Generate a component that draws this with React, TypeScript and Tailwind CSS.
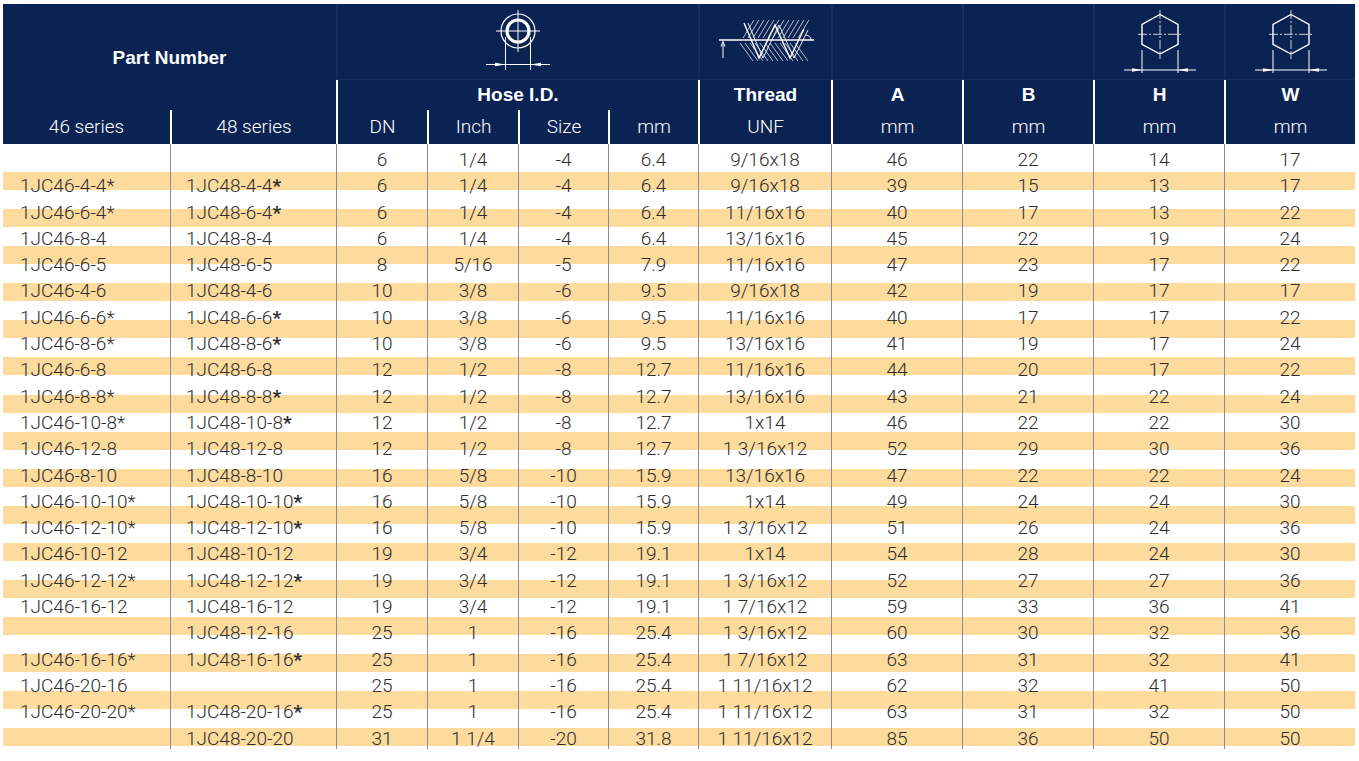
import React from "react";

const COLS =
  "grid grid-cols-[167px_166px_91px_91px_90px_90px_133px_131px_131px_131px_131px]";

type Row = string[];

// part 46, part 48, DN, inch, size, mm, UNF, A, B, H, W
const rows: Row[] = [
  ["", "", "6", "1/4", "-4", "6.4", "9/16x18", "46", "22", "14", "17"],
  ["1JC46-4-4*", "1JC48-4-4*", "6", "1/4", "-4", "6.4", "9/16x18", "39", "15", "13", "17"],
  ["1JC46-6-4*", "1JC48-6-4*", "6", "1/4", "-4", "6.4", "11/16x16", "40", "17", "13", "22"],
  ["1JC46-8-4", "1JC48-8-4", "6", "1/4", "-4", "6.4", "13/16x16", "45", "22", "19", "24"],
  ["1JC46-6-5", "1JC48-6-5", "8", "5/16", "-5", "7.9", "11/16x16", "47", "23", "17", "22"],
  ["1JC46-4-6", "1JC48-4-6", "10", "3/8", "-6", "9.5", "9/16x18", "42", "19", "17", "17"],
  ["1JC46-6-6*", "1JC48-6-6*", "10", "3/8", "-6", "9.5", "11/16x16", "40", "17", "17", "22"],
  ["1JC46-8-6*", "1JC48-8-6*", "10", "3/8", "-6", "9.5", "13/16x16", "41", "19", "17", "24"],
  ["1JC46-6-8", "1JC48-6-8", "12", "1/2", "-8", "12.7", "11/16x16", "44", "20", "17", "22"],
  ["1JC46-8-8*", "1JC48-8-8*", "12", "1/2", "-8", "12.7", "13/16x16", "43", "21", "22", "24"],
  ["1JC46-10-8*", "1JC48-10-8*", "12", "1/2", "-8", "12.7", "1x14", "46", "22", "22", "30"],
  ["1JC46-12-8", "1JC48-12-8", "12", "1/2", "-8", "12.7", "1 3/16x12", "52", "29", "30", "36"],
  ["1JC46-8-10", "1JC48-8-10", "16", "5/8", "-10", "15.9", "13/16x16", "47", "22", "22", "24"],
  ["1JC46-10-10*", "1JC48-10-10*", "16", "5/8", "-10", "15.9", "1x14", "49", "24", "24", "30"],
  ["1JC46-12-10*", "1JC48-12-10*", "16", "5/8", "-10", "15.9", "1 3/16x12", "51", "26", "24", "36"],
  ["1JC46-10-12", "1JC48-10-12", "19", "3/4", "-12", "19.1", "1x14", "54", "28", "24", "30"],
  ["1JC46-12-12*", "1JC48-12-12*", "19", "3/4", "-12", "19.1", "1 3/16x12", "52", "27", "27", "36"],
  ["1JC46-16-12", "1JC48-16-12", "19", "3/4", "-12", "19.1", "1 7/16x12", "59", "33", "36", "41"],
  ["", "1JC48-12-16", "25", "1", "-16", "25.4", "1 3/16x12", "60", "30", "32", "36"],
  ["1JC46-16-16*", "1JC48-16-16*", "25", "1", "-16", "25.4", "1 7/16x12", "63", "31", "32", "41"],
  ["1JC46-20-16", "", "25", "1", "-16", "25.4", "1 11/16x12", "62", "32", "41", "50"],
  ["1JC46-20-20*", "1JC48-20-16*", "25", "1", "-16", "25.4", "1 11/16x12", "63", "31", "32", "50"],
  ["", "1JC48-20-20", "31", "1 1/4", "-20", "31.8", "1 11/16x12", "85", "36", "50", "50"],
];

const HoseIcon = () => (
  <svg width="70" height="66" viewBox="0 0 70 66" fill="none" stroke="white">
    <circle cx="35" cy="23" r="17" strokeWidth="1.2" />
    <circle cx="35" cy="23" r="11" strokeWidth="3.2" />
    <line x1="13" y1="23" x2="57" y2="23" strokeWidth="1" />
    <line x1="35" y1="2" x2="35" y2="44" strokeWidth="1" />
    <line x1="22.5" y1="29" x2="22.5" y2="62" strokeWidth="1" />
    <line x1="47.5" y1="29" x2="47.5" y2="62" strokeWidth="1" />
    <line x1="3" y1="56.5" x2="67" y2="56.5" strokeWidth="1" />
    <path d="M12 54.8 L22.5 56.5 L12 58.2 Z" fill="white" stroke="none" />
    <path d="M58 54.8 L47.5 56.5 L58 58.2 Z" fill="white" stroke="none" />
  </svg>
);

const ThreadIcon = () => {
  const up = [27, 32, 37, 42, 47, 52, 57, 62, 67, 72, 77, 82];
  const down = [24, 29, 34, 39, 44, 49, 54, 59, 64, 69, 74, 79];
  return (
    <svg width="100" height="46" viewBox="0 0 100 46" fill="none" stroke="white">
      {up.map((x) => (
        <line key={"u" + x} x1={x} y1="21" x2={x + 11} y2="3" strokeWidth="0.7" />
      ))}
      {down.map((x) => (
        <line key={"d" + x} x1={x} y1="26" x2={x + 13} y2="44" strokeWidth="0.7" />
      ))}
      <line x1="3" y1="23" x2="98" y2="23" strokeWidth="1.4" />
      <line x1="7" y1="25" x2="7" y2="41" strokeWidth="1" />
      <path d="M5 29.5 L7 24.5 L9 29.5" strokeWidth="1" />
      <polyline points="28,6 43,41 59,8 74,41 88,12" strokeWidth="1.4" />
      <polyline points="32,6 47,41 63,8 78,41 92,13" strokeWidth="0.9" />
      <path d="M90 18 Q95 19 95 23" strokeWidth="0.9" />
    </svg>
  );
};

const HexIcon = () => (
  <svg width="80" height="68" viewBox="0 0 80 68" fill="none" stroke="white">
    <polygon points="40,6.5 58,16.3 58,36.3 40,46 22,36.3 22,16.3" strokeWidth="1.4" />
    <line x1="18" y1="26.3" x2="62" y2="26.3" strokeWidth="0.8" strokeDasharray="9 2 2 2" />
    <line x1="40" y1="2" x2="40" y2="51" strokeWidth="0.8" strokeDasharray="9 2 2 2" />
    <line x1="22" y1="42" x2="22" y2="65" strokeWidth="1" />
    <line x1="58" y1="42" x2="58" y2="65" strokeWidth="1" />
    <line x1="4" y1="62" x2="76" y2="62" strokeWidth="1" />
    <path d="M12 60.3 L22 62 L12 63.7 Z" fill="white" stroke="none" />
    <path d="M68 60.3 L58 62 L68 63.7 Z" fill="white" stroke="none" />
  </svg>
);

const PartCell = ({ text, boldStar }: { text: string; boldStar?: boolean }) => {
  if (!text) return null;
  if (text.endsWith("*") && boldStar) {
    return (
      <>
        {text.slice(0, -1)}
        <span className="font-bold">*</span>
      </>
    );
  }
  return <>{text}</>;
};

const HeaderTable = () => {
  const sep = "border-l-2 border-white";
  const iconCell = "flex justify-center border-b border-white/[0.05]";
  const label = "flex items-center justify-center font-bold";
  const unit = "flex items-center justify-center font-['Roboto',sans-serif] font-light";
  return (
    <div className={`${COLS} grid-rows-[76px_30px_34px] bg-[#0b2353] text-[19px] text-white`}>
      {/* row 1: icons */}
      <div className="col-span-2 row-span-2 flex items-center justify-center pt-[2px] font-bold">
        Part Number
      </div>
      <div className={`col-span-4 ${sep} ${iconCell} pt-1`}>
        <HoseIcon />
      </div>
      <div className={`${sep} ${iconCell} pt-[13px]`}>
        <ThreadIcon />
      </div>
      <div className={`${sep} ${iconCell}`} />
      <div className={`${sep} ${iconCell}`} />
      <div className={`${sep} ${iconCell} pt-1`}>
        <HexIcon />
      </div>
      <div className={`${sep} ${iconCell} pt-1`}>
        <HexIcon />
      </div>

      {/* row 2: labels */}
      <div className={`col-span-4 ${sep} ${label}`}>Hose I.D.</div>
      <div className={`${sep} ${label}`}>Thread</div>
      <div className={`${sep} ${label}`}>A</div>
      <div className={`${sep} ${label}`}>B</div>
      <div className={`${sep} ${label}`}>H</div>
      <div className={`${sep} ${label}`}>W</div>

      {/* row 3: units */}
      <div className={unit}>46 series</div>
      <div className={`${sep} ${unit}`}>48 series</div>
      <div className={`${sep} ${unit}`}>DN</div>
      <div className={`${sep} ${unit}`}>Inch</div>
      <div className={`${sep} ${unit}`}>Size</div>
      <div className={`${sep} ${unit}`}>mm</div>
      <div className={`${sep} ${unit}`}>UNF</div>
      <div className={`${sep} ${unit}`}>mm</div>
      <div className={`${sep} ${unit}`}>mm</div>
      <div className={`${sep} ${unit}`}>mm</div>
      <div className={`${sep} ${unit}`}>mm</div>
    </div>
  );
};

const BodyTable = () => (
  <div
    className={`${COLS} bg-white bg-[image:repeating-linear-gradient(to_bottom,#fcdb9d_0px,#fcdb9d_18px,transparent_18px,transparent_37.1px)] bg-no-repeat bg-size-[100%_575px] bg-position-[0_27.7px] font-['Roboto',sans-serif] text-[19px] font-light text-[#2e2e2e]`}
  >
    {rows.map((row, r) =>
      row.map((cell, c) => (
        <div
          key={r + "-" + c}
          className={`h-[26.3px] whitespace-nowrap pt-[3px] leading-[26.3px] ${
            c > 0 ? "border-l border-[#8c8c8c]" : ""
          } ${c === 0 ? "pl-[17px] text-left" : c === 1 ? "pl-[15px] text-left" : "text-center"}`}
        >
          {c < 2 ? <PartCell text={cell} boldStar={c === 1} /> : cell}
        </div>
      ))
    )}
  </div>
);

export default function App() {
  return (
    <div className="min-h-screen bg-white pl-[3px] pt-[4px] font-['Liberation_Sans','Arial',sans-serif]">
      <div className="w-[1352px]">
        <HeaderTable />
        <BodyTable />
      </div>
    </div>
  );
}
